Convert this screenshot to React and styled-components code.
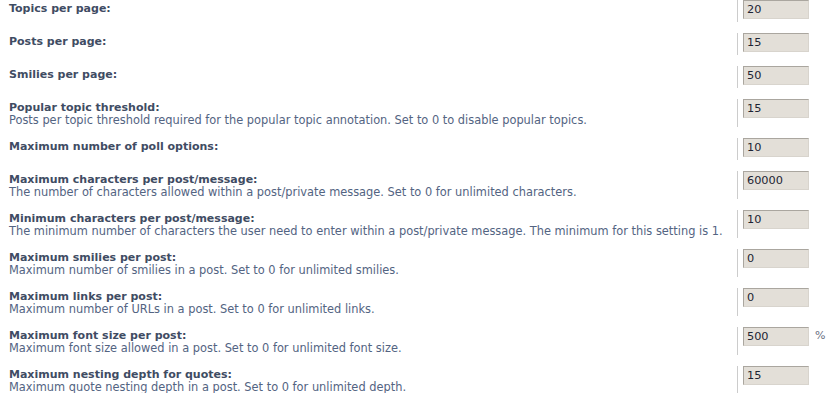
import React from "react";
import styled, { createGlobalStyle } from "styled-components";

const GlobalStyle = createGlobalStyle`
  html, body {
    margin: 0;
    padding: 0;
    background: #ffffff;
  }
  body {
    font-family: "DejaVu Sans", Verdana, sans-serif;
    overflow: hidden;
  }
`;

const Fieldset = styled.div`
  margin-top: -4px;
  width: 832px;
`;

const Row = styled.dl`
  display: flex;
  align-items: stretch;
  margin: 0 0 3px 0;
  padding: 4px 0;
`;

const Term = styled.dt`
  box-sizing: border-box;
  flex: 0 0 737px;
  padding: 2px 0 1px 9px;
  margin: 0;
`;

const Label = styled.label`
  display: block;
  font-size: 11px;
  line-height: 13px;
  font-weight: bold;
  color: #3f4c63;
`;

const Explain = styled.span`
  display: block;
  font-size: 11.4px;
  line-height: 12px;
  color: #536482;
  white-space: nowrap;
`;

const Def = styled.dd`
  box-sizing: border-box;
  display: flex;
  align-items: flex-start;
  min-height: 22px;
  margin: 0;
  padding-left: 5px;
  border-left: 1px solid #cccccc;
`;

const TextInput = styled.input`
  box-sizing: border-box;
  width: 66px;
  height: 19px;
  margin: 0;
  padding: 0 3px;
  border: 1px solid;
  border-color: #aaa69f #d8d4cd #d8d4cd #aaa69f;
  background: #e3dfd8;
  font-family: "DejaVu Sans", Verdana, sans-serif;
  font-size: 11.3px;
  line-height: 17px;
  color: #1d2433;
  outline: none;
`;

const Unit = styled.span`
  margin-left: 6px;
  font-size: 11px;
  line-height: 17px;
  color: #6a7182;
`;

const settings = [
  { label: "Topics per page:", value: "20" },
  { label: "Posts per page:", value: "15" },
  { label: "Smilies per page:", value: "50" },
  {
    label: "Popular topic threshold:",
    explain:
      "Posts per topic threshold required for the popular topic annotation. Set to 0 to disable popular topics.",
    value: "15",
  },
  { label: "Maximum number of poll options:", value: "10" },
  {
    label: "Maximum characters per post/message:",
    explain:
      "The number of characters allowed within a post/private message. Set to 0 for unlimited characters.",
    value: "60000",
  },
  {
    label: "Minimum characters per post/message:",
    explain:
      "The minimum number of characters the user need to enter within a post/private message. The minimum for this setting is 1.",
    value: "10",
  },
  {
    label: "Maximum smilies per post:",
    explain: "Maximum number of smilies in a post. Set to 0 for unlimited smilies.",
    value: "0",
  },
  {
    label: "Maximum links per post:",
    explain: "Maximum number of URLs in a post. Set to 0 for unlimited links.",
    value: "0",
  },
  {
    label: "Maximum font size per post:",
    explain: "Maximum font size allowed in a post. Set to 0 for unlimited font size.",
    value: "500",
    unit: "%",
  },
  {
    label: "Maximum nesting depth for quotes:",
    explain: "Maximum quote nesting depth in a post. Set to 0 for unlimited depth.",
    value: "15",
  },
];

export default function App() {
  return (
    <>
      <GlobalStyle />
      <Fieldset>
        {settings.map((s, i) => (
          <Row key={i}>
            <Term>
              <Label htmlFor={`f${i}`}>{s.label}</Label>
              {s.explain && <Explain>{s.explain}</Explain>}
            </Term>
            <Def>
              <TextInput id={`f${i}`} type="text" defaultValue={s.value} />
              {s.unit && <Unit>{s.unit}</Unit>}
            </Def>
          </Row>
        ))}
      </Fieldset>
    </>
  );
}
